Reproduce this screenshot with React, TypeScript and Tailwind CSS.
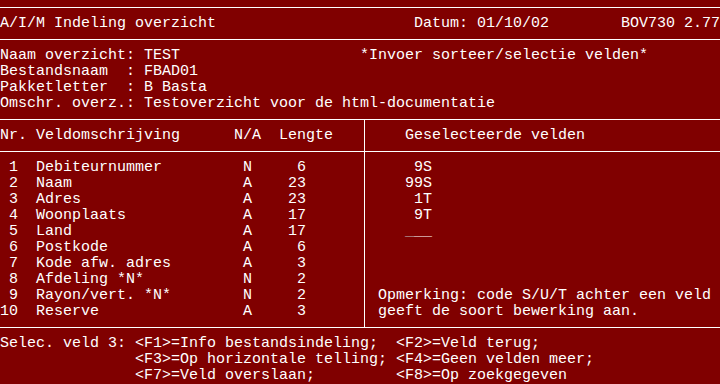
import React from "react";

const velden = [
  { nr: "1", oms: "Debiteurnummer", na: "N", len: "6" },
  { nr: "2", oms: "Naam", na: "A", len: "23" },
  { nr: "3", oms: "Adres", na: "A", len: "23" },
  { nr: "4", oms: "Woonplaats", na: "A", len: "17" },
  { nr: "5", oms: "Land", na: "A", len: "17" },
  { nr: "6", oms: "Postkode", na: "A", len: "6" },
  { nr: "7", oms: "Kode afw. adres", na: "A", len: "3" },
  { nr: "8", oms: "Afdeling *N*", na: "N", len: "2" },
  { nr: "9", oms: "Rayon/vert. *N*", na: "N", len: "2" },
  { nr: "10", oms: "Reserve", na: "A", len: "3" },
];

const geselecteerd = ["9S", "99S", "1T", "9T"];

const Line = () => (
  <div className="h-4 pt-[7px]">
    <div className="h-px bg-white" />
  </div>
);

const Row = ({ children }: { children?: React.ReactNode }) => (
  <div className="h-4 whitespace-pre">{children}</div>
);

export default function App() {
  return (
    <div className="w-[720px] h-[384px] overflow-hidden bg-[#800000] text-white font-['Liberation_Mono',monospace] text-[15px] leading-4">
      <Line />
      <Row>
        {"A/I/M Indeling overzicht                      Datum: 01/10/02        BOV730 2.77"}
      </Row>
      <Line />
      <Row>{"Naam overzicht: TEST                    *Invoer sorteer/selectie velden*"}</Row>
      <Row>{"Bestandsnaam  : FBAD01"}</Row>
      <Row>{"Pakketletter  : B Basta"}</Row>
      <Row>{"Omschr. overz.: Testoverzicht voor de html-documentatie"}</Row>

      {/* scheidingslijn, daarna de twee panelen */}
      <div className="h-2 pt-[7px]">
        <div className="h-px bg-white" />
      </div>
      <div className="flex h-[207px]">
        <div className="w-[364px] pt-2">
          <Row>{"Nr. Veldomschrijving      N/A  Lengte"}</Row>
          <Line />
          {velden.map((v) => (
            <Row key={v.nr}>
              {`${v.nr.padStart(2)}  ${v.oms.padEnd(23)}${v.na}    ${v.len.padStart(2)}`}
            </Row>
          ))}
        </div>
        <div className="w-px bg-white" />
        <div className="flex-1 pt-2">
          <div className="pl-[13px]">
            <Row>{"   Geselecteerde velden"}</Row>
          </div>
          <Line />
          <div className="pl-[13px]">
            {geselecteerd.map((g) => (
              <Row key={g}>{`   ${g.padStart(3)}`}</Row>
            ))}
            <Row>
              {"   "}
              <span className="text-[#c0c0c0]">_</span>
              {"__"}
            </Row>
            <Row />
            <Row />
            <Row />
            <Row>{"Opmerking: code S/U/T achter een veld"}</Row>
            <Row>{"geeft de soort bewerking aan."}</Row>
          </div>
        </div>
      </div>
      <div className="h-px bg-white" />
      <div className="h-2" />
      <Row>{"Selec. veld 3: <F1>=Info bestandsindeling;  <F2>=Veld terug;"}</Row>
      <Row>{"               <F3>=Op horizontale telling; <F4>=Geen velden meer;"}</Row>
      <Row>{"               <F7>=Veld overslaan;         <F8>=Op zoekgegeven"}</Row>
    </div>
  );
}
